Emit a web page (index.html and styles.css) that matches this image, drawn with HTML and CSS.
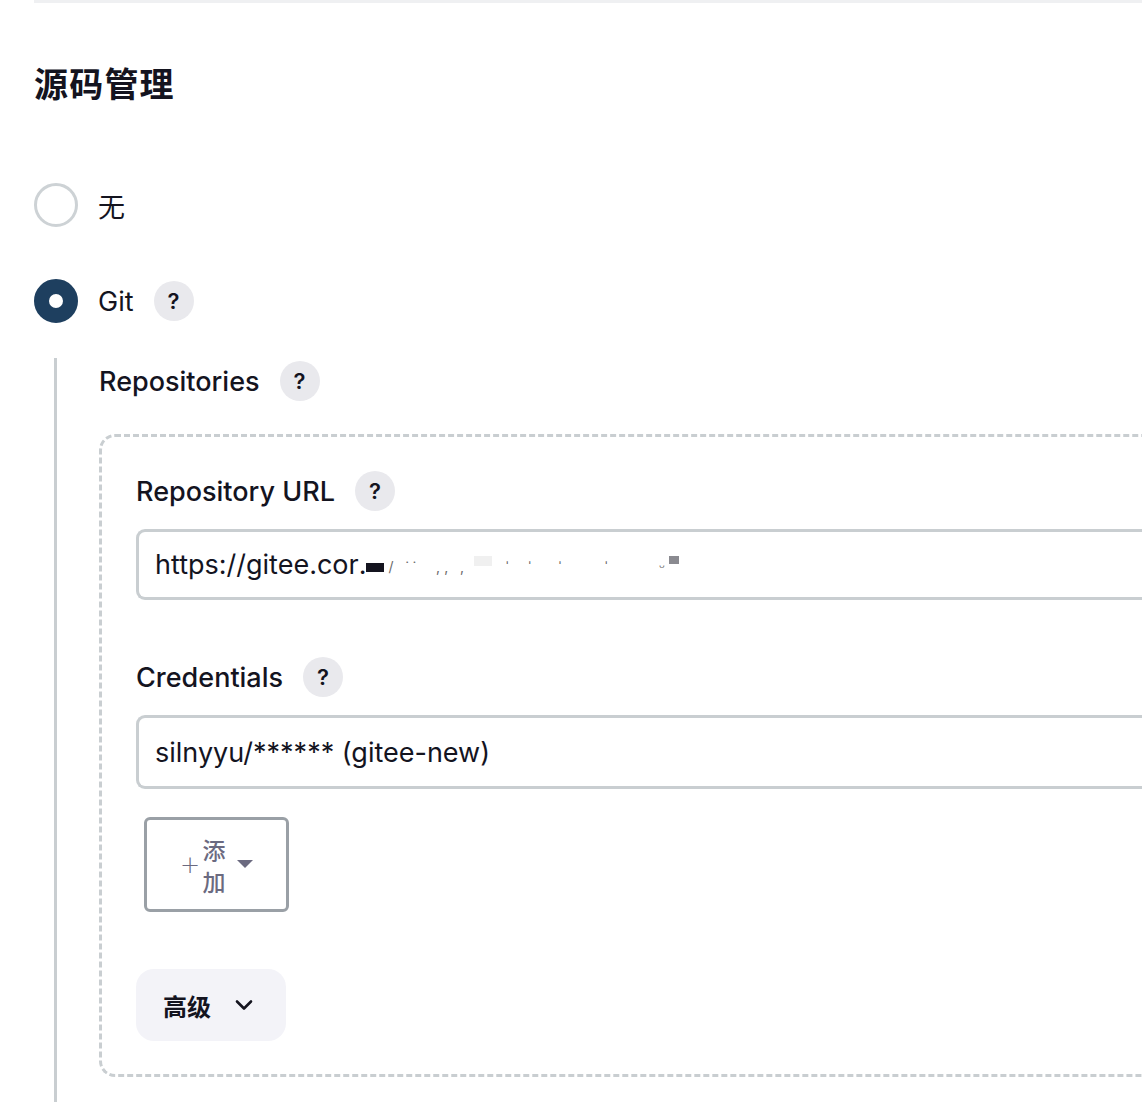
FILE: index.html
```html
<!DOCTYPE html>
<html lang="zh">
<head>
<meta charset="utf-8">
<title>源码管理</title>
<link rel="stylesheet" href="styles.css">
</head>
<body>
<div class="page">
  <div class="topline"></div>
  <h2 class="title">源码管理</h2>

  <div class="radio-row first">
    <span class="radio"></span>
    <span class="radio-label">无</span>
  </div>

  <div class="radio-row second">
    <span class="radio checked"></span>
    <span class="radio-label">Git</span>
    <span class="help">?</span>
  </div>

  <div class="nested">
    <div class="field-label repos">Repositories <span class="help">?</span></div>
    <div class="repo-box">
      <div class="field-label">Repository URL <span class="help">?</span></div>
      <div class="input">https://gitee.cor<span class="redact">.</span><span class="mark m1"></span><span class="ghost">/ ˙˙ &nbsp;,, ,</span><span class="mark m2"></span><span class="ghost">&nbsp;ˈ&nbsp; ˈ &nbsp; ˈ &nbsp;&nbsp;&nbsp; ˈ &nbsp;&nbsp;&nbsp;&nbsp; ᵕ</span><span class="mark m3"></span></div>

      <div class="field-label cred">Credentials <span class="help">?</span></div>
      <div class="input">silnyyu/****** (gitee-new)</div>

      <button class="add-btn" type="button">
        <span class="plus">+</span>
        <span class="add-text">添加</span>
        <span class="caret"></span>
      </button>

      <button class="adv-btn" type="button">
        <span>高级</span>
        <svg class="chev" width="18" height="12" viewBox="0 0 18 12"><path d="M2 2.5 L9 9.5 L16 2.5" fill="none" stroke="#14141f" stroke-width="2.6" stroke-linecap="round" stroke-linejoin="round"/></svg>
      </button>
    </div>
  </div>
</div>
</body>
</html>
```

FILE: styles.css
```css
html, body {
  margin: 0;
  padding: 0;
  background: #ffffff;
  overflow: hidden;
}

body {
  font-family: Inter, "Noto Sans", "Noto Sans CJK SC", sans-serif;
  color: #14141f;
}

.page {
  width: 1142px;
  height: 1102px;
  padding-left: 34px;
  box-sizing: border-box;
  overflow: hidden;
}

.topline {
  height: 3px;
  background: #eff0f2;
}

.title {
  margin: 0;
  padding-top: 59px;
  font-family: "Noto Sans CJK SC", sans-serif;
  font-size: 34px;
  font-weight: 700;
  line-height: 42px;
  letter-spacing: 1.2px;
}

.radio-row {
  display: flex;
  align-items: center;
  height: 44px;
}

.radio-row.first {
  margin-top: 79px;
}

.radio-row.second {
  margin-top: 52px;
}

.radio {
  width: 44px;
  height: 44px;
  box-sizing: border-box;
  border-radius: 50%;
  border: 3px solid #cdd2d5;
  background: #fff;
  flex: none;
}

.radio.checked {
  border: 15px solid #1e3f5f;
  background: #ffffff;
}

.radio-label {
  margin-left: 20px;
  font-size: 27px;
  font-family: Inter, "Noto Sans CJK SC", sans-serif;
}

.help {
  display: inline-flex;
  align-items: center;
  justify-content: center;
  width: 40px;
  height: 40px;
  border-radius: 50%;
  background: #e9e9ed;
  color: #14141f;
  font-size: 22px;
  font-weight: 600;
  font-family: Inter, sans-serif;
  margin-left: 20px;
  flex: none;
}

.nested {
  margin-top: 35px;
  margin-left: 20px;
  margin-right: -300px;
  border-left: 3px solid #c9ced1;
  padding-left: 42px;
  padding-top: 3px;
  padding-bottom: 30px;
}

.field-label {
  display: flex;
  align-items: center;
  font-size: 27px;
  font-weight: 500;
  height: 40px;
}

.repo-box {
  margin-top: 33px;
  border: 3px dashed #c9ced1;
  border-right: none;
  border-radius: 16px 0 0 16px;
  padding: 34px 0 33px 34px;
}

.input {
  margin-top: 18px;
  height: 71px;
  box-sizing: border-box;
  border: 3px solid #c9ced1;
  border-right: none;
  border-radius: 9px 0 0 9px;
  display: flex;
  align-items: center;
  padding-left: 16px;
  font-size: 27px;
  color: #14141f;
  white-space: pre;
}

.repo-box .field-label.cred {
  margin-top: 57px;
}

.repo-box .field-label.cred + .input {
  height: 74px;
  margin-top: 18px;
}

.redact {
  color: #14141f;
}

.ghost {
  color: #6a6a6a;
  font-size: 14px;
  letter-spacing: 4px;
  transform: translateY(2px);
}

.mark {
  display: inline-block;
}

.mark.m1 {
  width: 18px;
  height: 9px;
  background: #14141f;
  margin-top: 6px;
  margin-right: 4px;
}

.mark.m2 {
  width: 18px;
  height: 10px;
  background: #f0f0f0;
  margin: -8px 6px 0 6px;
}

.mark.m3 {
  width: 10px;
  height: 8px;
  background: #8a8a90;
  margin-top: -10px;
}

.add-btn {
  display: flex;
  align-items: center;
  justify-content: center;
  margin: 28px 0 0 8px;
  width: 145px;
  height: 95px;
  box-sizing: border-box;
  border: 3px solid #9aa0a6;
  border-radius: 6px;
  background: #ffffff;
  color: #6b6a80;
  font-family: "Noto Sans CJK SC", sans-serif;
  padding: 0;
  cursor: pointer;
}

.plus {
  font-size: 24px;
  font-weight: 300;
  font-family: "DejaVu Sans", sans-serif;
  margin-right: 1px;
  line-height: 1;
}

.add-text {
  width: 26px;
  font-size: 23px;
  line-height: 32px;
  font-weight: 500;
  word-break: break-all;
}

.caret {
  width: 0;
  height: 0;
  border-left: 8px solid transparent;
  border-right: 8px solid transparent;
  border-top: 8px solid #6b6a80;
  margin-left: 10px;
  margin-top: -2px;
}

.adv-btn {
  display: flex;
  align-items: center;
  gap: 24px;
  margin-top: 57px;
  height: 72px;
  width: 150px;
  box-sizing: border-box;
  border: none;
  border-radius: 18px;
  background: #f3f3f8;
  padding: 0 0 0 27px;
  font-family: "Noto Sans CJK SC", sans-serif;
  font-size: 24px;
  font-weight: 700;
  color: #14141f;
  cursor: pointer;
}

.chev {
  display: block;
}
```
